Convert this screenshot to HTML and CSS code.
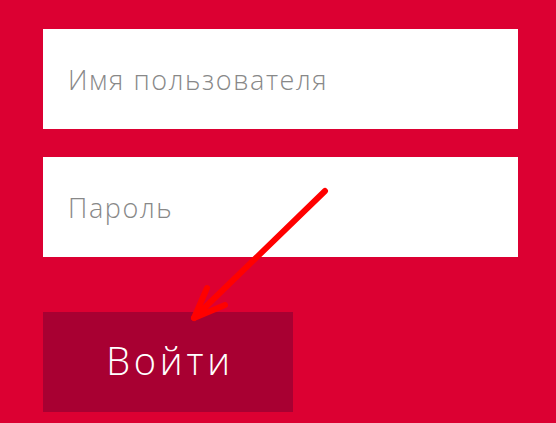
FILE: index.html
```html
<!DOCTYPE html>
<html lang="ru">
<head>
<meta charset="utf-8">
<link rel="stylesheet" href="styles.css">
</head>
<body>
<form class="login">
  <div class="field"><span class="placeholder">Имя пользователя</span></div>
  <div class="field"><span class="placeholder">Пароль</span></div>
  <button type="button" class="submit">Войти</button>
</form>
<svg class="arrow" width="556" height="423" viewBox="0 0 556 423">
  <g fill="none" stroke="#ff0000" stroke-width="6" stroke-linecap="round" stroke-linejoin="round">
    <path d="M325 191 L194 318"/>
    <path d="M207 288 L194 318 L225 305"/>
  </g>
</svg>
</body>
</html>
```
FILE: styles.css
```css
html, body {
  margin: 0;
  padding: 0;
}
body {
  background: #dc0032;
  width: 556px;
  height: 423px;
  overflow: hidden;
  position: relative;
  font-family: "Open Sans", "DejaVu Sans", sans-serif;
}
.login {
  display: flex;
  flex-direction: column;
  align-items: flex-start;
  padding: 29px 0 0 43px;
}
.field {
  width: 475px;
  height: 100px;
  background: #ffffff;
  display: flex;
  align-items: center;
  padding-left: 25px;
  box-sizing: border-box;
  margin-bottom: 28px;
}
.placeholder {
  color: #888888;
  font-size: 27px;
  font-weight: 300;
  letter-spacing: 1.6px;
  line-height: 1;
  padding-top: 1px;
}
.submit {
  margin-top: 27px;
  width: 250px;
  height: 100px;
  background: #a80032;
  border: 0;
  color: #ffffff;
  font-family: "Open Sans", "DejaVu Sans", sans-serif;
  font-size: 38px;
  font-weight: 300;
  letter-spacing: 3.8px;
  padding: 0 0 4px 4px;
}
.arrow {
  position: absolute;
  left: 0;
  top: 0;
  pointer-events: none;
}
```
